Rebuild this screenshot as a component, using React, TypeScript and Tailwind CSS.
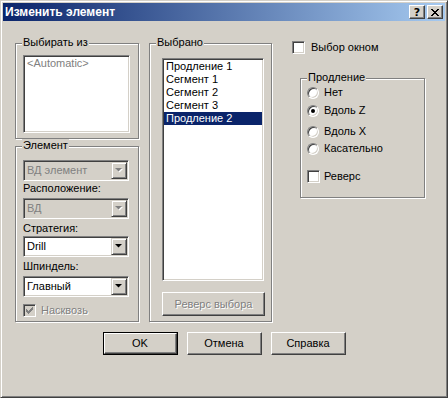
import React from "react";

const sunken =
  "border border-t-[#808080] border-l-[#808080] border-b-white border-r-white p-px shadow-[inset_1px_1px_0_#404040,inset_-1px_-1px_0_#d4d0c8]";
const raised =
  "border border-t-white border-l-white border-b-[#404040] border-r-[#404040] shadow-[inset_-1px_-1px_0_#808080]";
const arrowRaised =
  "border border-t-[#d4d0c8] border-l-[#d4d0c8] border-b-[#404040] border-r-[#404040] shadow-[inset_1px_1px_0_#fff,inset_-1px_-1px_0_#808080]";
const etched =
  "relative border border-[#808080] shadow-[1px_1px_0_#fff,inset_1px_1px_0_#fff]";
const disabledText = "text-[#808080] [text-shadow:1px_1px_0_#fff]";

function GroupLabel({ children }: { children: React.ReactNode }) {
  return (
    <div className="absolute left-[6px] top-[-8px] bg-[#d4d0c8] px-px leading-[13px]">
      {children}
    </div>
  );
}

function Arrow({ disabled }: { disabled?: boolean }) {
  return (
    <div className={`flex h-[17px] w-4 items-center justify-center bg-[#d4d0c8] ${arrowRaised}`}>
      <svg width="8" height="5" viewBox="0 0 8 5">
        {disabled ? (
          <>
            <path d="M1 1h7L4.5 4.5z" fill="#fff" />
            <path d="M0 0h7L3.5 3.5z" fill="#808080" />
          </>
        ) : (
          <path d="M0 0h7L3.5 3.5z" fill="#000" />
        )}
      </svg>
    </div>
  );
}

function Combo({ value, disabled }: { value: string; disabled?: boolean }) {
  return (
    <div
      className={`flex h-[21px] w-[106px] ${sunken} ${disabled ? "bg-[#d4d0c8]" : "bg-white"}`}
    >
      <div
        className={`flex-1 pl-[2px] leading-[17px] ${disabled ? "text-[#808080]" : "text-black"}`}
      >
        {value}
      </div>
      <Arrow disabled={disabled} />
    </div>
  );
}

function Check({ checked, disabled }: { checked?: boolean; disabled?: boolean }) {
  return (
    <div
      className={`flex h-[13px] w-[13px] shrink-0 items-center justify-center ${sunken} ${disabled ? "bg-[#d4d0c8]" : "bg-white"}`}
    >
      {checked && (
        <svg width="7" height="7" viewBox="0 0 7 7" shapeRendering="crispEdges">
          <path
            d="M6 0h1v3h-1v1h-1v1h-1v1h-1v1h-1v-1h-1v-1h-1v-3h1v1h1v1h1v-1h1v-1h1z"
            fill={disabled ? "#808080" : "#000"}
          />
        </svg>
      )}
    </div>
  );
}

function Radio({ checked }: { checked?: boolean }) {
  return (
    <div className="flex h-3 w-3 shrink-0 items-center justify-center rounded-full border border-t-[#808080] border-l-[#808080] border-b-white border-r-white bg-white shadow-[inset_1px_1px_0_#404040,inset_-1px_-1px_0_#d4d0c8]">
      {checked && <div className="h-1 w-1 rounded-full bg-black" />}
    </div>
  );
}

function PushButton({
  children,
  isDefault,
}: {
  children: React.ReactNode;
  isDefault?: boolean;
}) {
  if (isDefault) {
    return (
      <div className="h-[23px] w-[75px] border border-black">
        <div className={`flex h-full w-full items-center justify-center ${raised}`}>{children}</div>
      </div>
    );
  }
  return (
    <div className={`flex h-[23px] w-[75px] items-center justify-center ${raised}`}>{children}</div>
  );
}

export default function App() {
  const items = ["Продление 1", "Сегмент 1", "Сегмент 2", "Сегмент 3", "Продление 2"];
  return (
    <div className="flex h-[398px] w-[448px] flex-col border border-t-[#d4d0c8] border-l-[#d4d0c8] border-b-[#404040] border-r-[#404040] bg-[#d4d0c8] p-[2px] font-['Liberation_Sans',Arial,sans-serif] text-[11px] text-black shadow-[inset_1px_1px_0_#fff,inset_-1px_-1px_0_#808080]">
      {/* Title bar */}
      <div className="flex h-[18px] items-center bg-linear-to-r/srgb from-[#0a246a] to-[#a6caf0] pl-[2px] pr-[2px]">
        <div className="flex-1 font-['Liberation_Sans',Arial,sans-serif] text-[12px] font-bold leading-[18px] text-white">
          Изменить элемент
        </div>
        <div className={`flex h-[14px] w-4 items-center justify-center bg-[#d4d0c8] ${raised}`}>
          <span className="font-['DejaVu_Sans',sans-serif] text-[11px] font-bold leading-none">?</span>
        </div>
        <div className={`ml-[2px] flex h-[14px] w-4 items-center justify-center bg-[#d4d0c8] ${raised}`}>
          <svg width="8" height="7" viewBox="0 0 8 7" shapeRendering="crispEdges">
            <path
              d="M0 0h2v1h1v1h2v-1h1v-1h2v1h-1v1h-1v1h-1v1h1v1h1v1h1v1h-2v-1h-1v-1h-2v1h-1v1h-2v-1h1v-1h1v-1h1v-1h-1v-1h-1v-1h-1z"
              fill="#000"
            />
          </svg>
        </div>
      </div>

      {/* Body */}
      <div className="flex flex-1 flex-col">
        <div className="flex items-start pl-[12px] pt-[22px]">
          {/* Left column */}
          <div className="flex w-[124px] flex-col">
            <div className={`h-[96px] ${etched}`}>
              <GroupLabel>Выбирать из</GroupLabel>
              <div className={`ml-[7px] mt-[11px] h-[78px] w-[107px] bg-white ${sunken}`}>
                <div className="pl-[2px] leading-[13px] text-[#808080]">&lt;Automatic&gt;</div>
              </div>
            </div>
            <div className={`mt-[7px] h-[176px] ${etched}`}>
              <GroupLabel>Элемент</GroupLabel>
              <div className="ml-[7px] mt-[13px] flex flex-col">
                <Combo value="ВД элемент" disabled />
                <div className="h-[17px] pt-[1px] leading-[13px]">Расположение:</div>
                <Combo value="ВД" disabled />
                <div className="h-[17px] pt-[3px] leading-[13px]">Стратегия:</div>
                <Combo value="Drill" />
                <div className="h-[19px] pt-[3px] leading-[13px]">Шпиндель:</div>
                <Combo value="Главный" />
                <div className="mt-[7px] flex items-center gap-[5px]">
                  <Check checked disabled />
                  <span className={`leading-[13px] ${disabledText}`}>Насквозь</span>
                </div>
              </div>
            </div>
          </div>

          {/* Middle column */}
          <div className={`ml-[10px] h-[279px] w-[123px] ${etched}`}>
            <GroupLabel>Выбрано</GroupLabel>
            <div className={`ml-[12px] mt-[14px] h-[223px] w-[102px] bg-white ${sunken}`}>
              {items.map((it, i) => (
                <div
                  key={i}
                  className={`h-[13px] pl-[2px] leading-[13px] ${i === 4 ? "bg-[#0a246a] text-white" : "text-black"}`}
                >
                  {it}
                </div>
              ))}
            </div>
            <div className={`ml-[12px] mt-[11px] flex h-[24px] w-[103px] items-center justify-center ${raised}`}>
              <span className={disabledText}>Реверс выбора</span>
            </div>
          </div>

          {/* Right column */}
          <div className="ml-[20px] flex flex-col">
            <div className="-mt-[2px] flex items-center gap-[6px]">
              <Check />
              <span className="leading-[13px]">Выбор окном</span>
            </div>
            <div className={`ml-[8px] mt-[24px] h-[120px] w-[125px] ${etched}`}>
              <GroupLabel>Продление</GroupLabel>
              <div className="ml-[6px] mt-[8px] flex flex-col">
                <div className="flex h-[18px] items-start gap-[5px]">
                  <Radio />
                  <span className="-mt-px leading-[13px]">Нет</span>
                </div>
                <div className="flex h-[21px] items-start gap-[5px]">
                  <Radio checked />
                  <span className="-mt-px leading-[13px]">Вдоль Z</span>
                </div>
                <div className="flex h-[17px] items-start gap-[5px]">
                  <Radio />
                  <span className="-mt-px leading-[13px]">Вдоль X</span>
                </div>
                <div className="flex h-[27px] items-start gap-[5px]">
                  <Radio />
                  <span className="-mt-px leading-[13px]">Касательно</span>
                </div>
                <div className="flex items-center gap-[4px]">
                  <Check />
                  <span className="leading-[13px]">Реверс</span>
                </div>
              </div>
            </div>
          </div>
        </div>

        {/* Buttons */}
        <div className="mt-[10px] flex justify-center gap-[9px]">
          <PushButton isDefault>OK</PushButton>
          <PushButton>Отмена</PushButton>
          <PushButton>Справка</PushButton>
        </div>
      </div>
    </div>
  );
}
